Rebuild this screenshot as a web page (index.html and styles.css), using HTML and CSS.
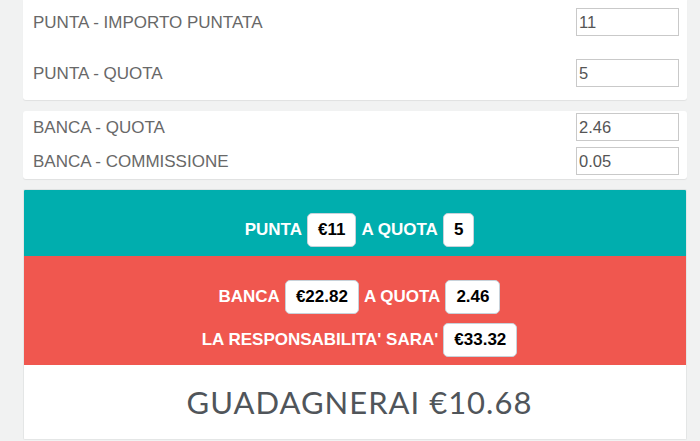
FILE: index.html
```html
<!DOCTYPE html>
<html lang="it">
<head>
<meta charset="utf-8">
<link rel="stylesheet" href="styles.css">
</head>
<body>
<div class="wrap">
  <div class="card card-punta">
    <div class="row"><span class="label">PUNTA - IMPORTO PUNTATA</span><input class="field" type="text" value="11"></div>
    <div class="row"><span class="label">PUNTA - QUOTA</span><input class="field" type="text" value="5"></div>
  </div>
  <div class="card card-banca">
    <div class="row"><span class="label">BANCA - QUOTA</span><input class="field" type="text" value="2.46"></div>
    <div class="row"><span class="label">BANCA - COMMISSIONE</span><input class="field" type="text" value="0.05"></div>
  </div>
  <div class="panel">
    <div class="sec sec-teal">
      <div class="line"><span>PUNTA</span><span class="badge">€11</span><span>A QUOTA</span><span class="badge">5</span></div>
    </div>
    <div class="sec sec-red">
      <div class="line"><span>BANCA</span><span class="badge">€22.82</span><span>A QUOTA</span><span class="badge">2.46</span></div>
      <div class="line"><span>LA RESPONSABILITA' SARA'</span><span class="badge">€33.32</span></div>
    </div>
    <div class="result">GUADAGNERAI €10.68</div>
  </div>
</div>
</body>
</html>
```
FILE: styles.css
```css
html, body {
  margin: 0;
  padding: 0;
  background: #f1f2f2;
  font-family: "Liberation Sans", Arial, sans-serif;
}
.wrap {
  padding: 0 13px 0 23px;
}
.card {
  background: #fff;
  border-radius: 3px;
  box-shadow: 0 1px 1px rgba(0, 0, 0, 0.07);
  display: flex;
  flex-direction: column;
}
.card-punta {
  padding: 8px 8px 13px 10px;
  gap: 23px;
  border-radius: 0 0 3px 3px;
}
.card-banca {
  margin-top: 11px;
  padding: 2px 8px 4px 10px;
  gap: 6px;
}
.row {
  display: flex;
  align-items: center;
  justify-content: space-between;
  height: 28px;
}
.label {
  font-size: 17px;
  color: #686868;
  padding-top: 1px;
}
.field {
  box-sizing: border-box;
  width: 103px;
  height: 28px;
  margin: 0;
  border: 1px solid #c9c9c9;
  border-radius: 0;
  padding: 0 2px;
  font-family: "Liberation Sans", Arial, sans-serif;
  font-size: 16.5px;
  color: #555;
  background: #fff;
  outline: none;
}
.panel {
  margin-top: 10px;
  border: 1px solid #e4e6e6;
  border-top-color: #dfe3e3;
  background: #fff;
  border-radius: 2px;
  overflow: hidden;
}
.sec {
  display: flex;
  flex-direction: column;
  align-items: center;
  gap: 9px;
  padding-left: 9px;
}
.sec-teal {
  background: #00aeae;
  padding-top: 23px;
  padding-bottom: 9px;
}
.sec-red {
  background: #f0574f;
  padding-top: 24px;
  padding-bottom: 8px;
}
.line {
  display: flex;
  align-items: center;
  gap: 5px;
  height: 34px;
  color: #fff;
  font-weight: bold;
  font-size: 17px;
  white-space: nowrap;
}
.badge {
  box-sizing: border-box;
  display: inline-flex;
  align-items: center;
  height: 34px;
  padding: 0 10px;
  background: #fff;
  border: 1px solid #c8d2da;
  border-radius: 5px;
  color: #000;
  font-weight: bold;
}
.result {
  height: 74px;
  display: flex;
  align-items: center;
  justify-content: center;
  padding-left: 9px;
  font-family: Lato, "Open Sans", sans-serif;
  font-size: 31px;
  color: #50555a;
  letter-spacing: 1px;
}
```
